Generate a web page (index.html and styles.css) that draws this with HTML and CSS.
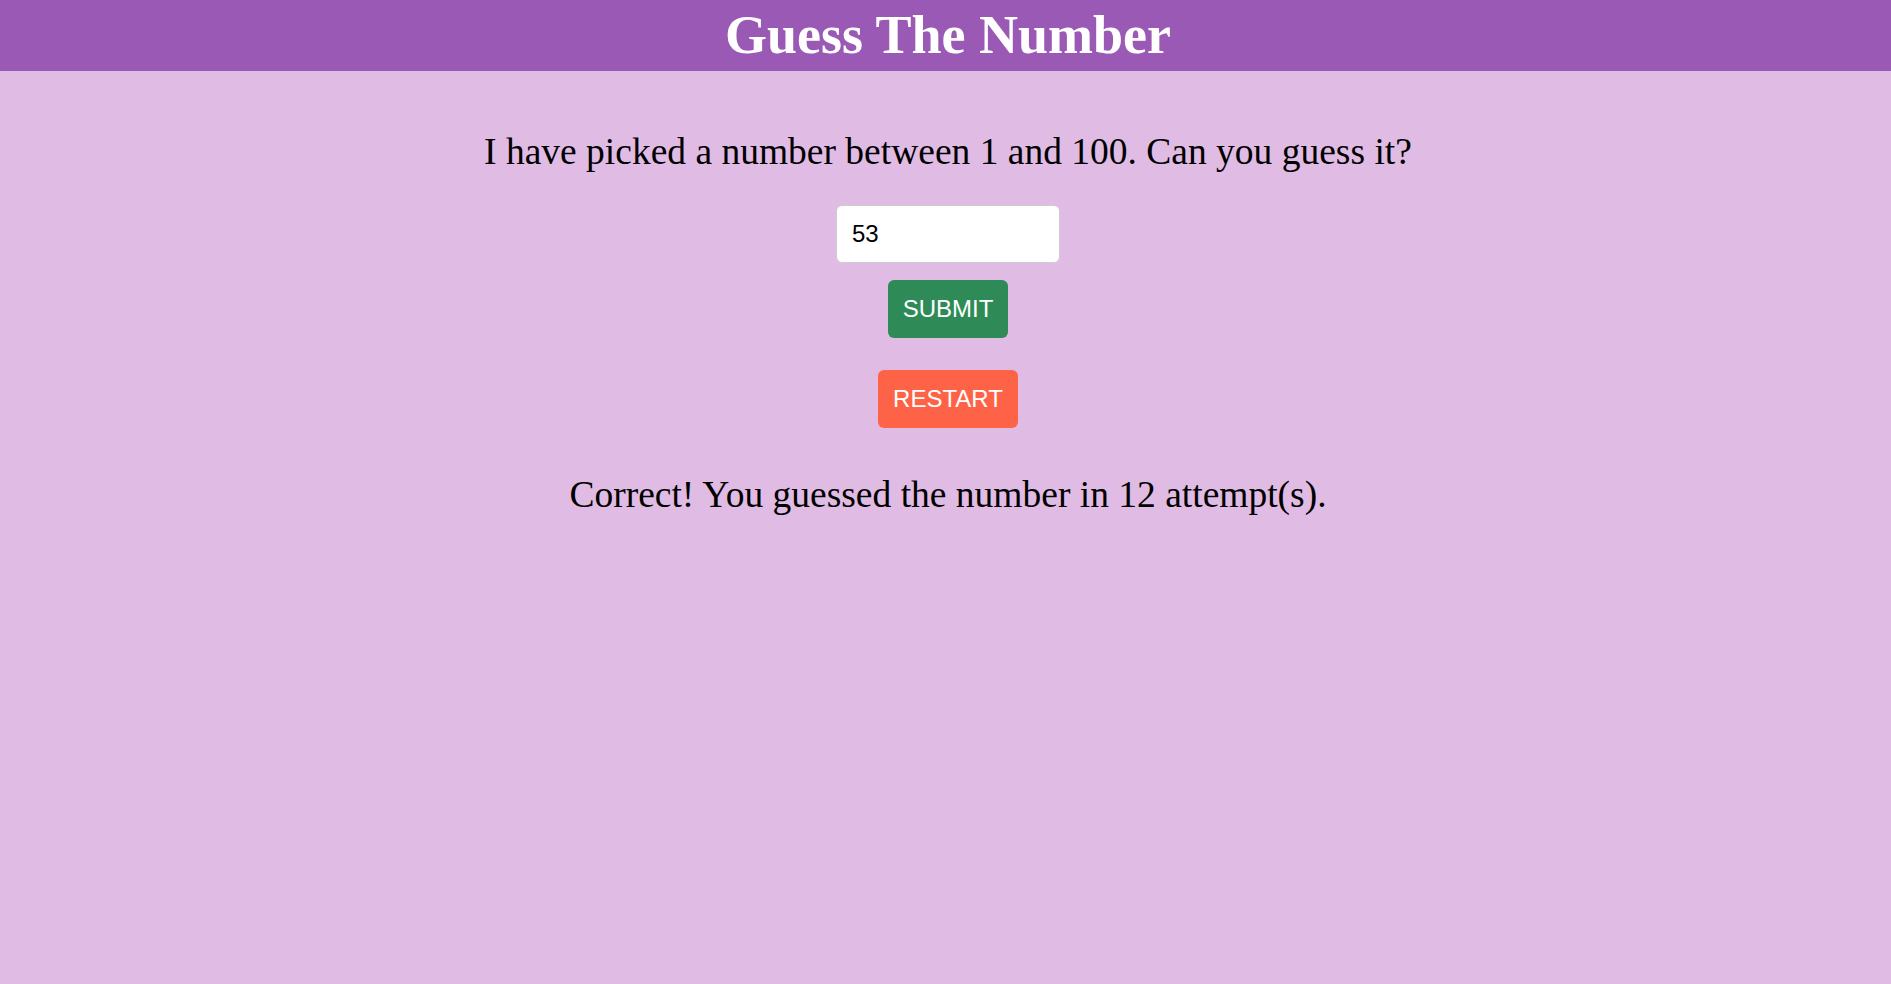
FILE: index.html
```html
<!DOCTYPE html>
<html lang="en">
<head>
<meta charset="utf-8">
<title>Guess The Number</title>
<link rel="stylesheet" href="styles.css">
</head>
<body>
<header class="header">
  <h1 class="title">Guess The Number</h1>
</header>
<main class="game">
  <p class="prompt">I have picked a number between 1 and 100. Can you guess it?</p>
  <input class="guess-input" type="number" value="53">
  <button class="btn btn-submit">SUBMIT</button>
  <button class="btn btn-restart">RESTART</button>
  <p class="message">Correct! You guessed the number in 12 attempt(s).</p>
</main>
</body>
</html>
```

FILE: styles.css
```css
html, body {
  margin: 0;
  padding: 0;
}
body {
  background: #e0bbe4;
  font-family: "Liberation Serif", "Times New Roman", serif;
  color: #000;
  min-height: 984px;
}
.header {
  background: #9b59b6;
  height: 71px;
  padding-left: 5px;
  display: flex;
  justify-content: center;
  align-items: center;
}
.title {
  margin: 0;
  color: #fff;
  font-size: 54px;
  font-weight: bold;
  line-height: 71px;
}
.game {
  display: flex;
  flex-direction: column;
  align-items: center;
  padding-left: 5px;
}
.prompt {
  font-size: 37.5px;
  margin: 60px 0 0;
  line-height: 41.5px;
}
.guess-input {
  box-sizing: border-box;
  margin-top: 32px;
  width: 224px;
  height: 58px;
  padding: 0 15px;
  font-family: "Liberation Sans", Arial, sans-serif;
  font-size: 24px;
  border: 1px solid #cccccc;
  border-radius: 6px;
  background: #fff;
  color: #000;
  outline: none;
  -moz-appearance: textfield;
}
.guess-input::-webkit-outer-spin-button,
.guess-input::-webkit-inner-spin-button {
  -webkit-appearance: none;
  margin: 0;
}
.btn {
  box-sizing: border-box;
  height: 58px;
  padding: 0 15px;
  border: none;
  border-radius: 6px;
  color: #fff;
  font-family: "Liberation Sans", Arial, sans-serif;
  font-size: 24px;
  cursor: pointer;
}
.btn-submit {
  background: #2e8b57;
  margin-top: 17px;
}
.btn-restart {
  background: #ff6347;
  margin-top: 32px;
}
.message {
  font-size: 37.5px;
  line-height: 41.5px;
  margin: 46px 0 0;
}
```
